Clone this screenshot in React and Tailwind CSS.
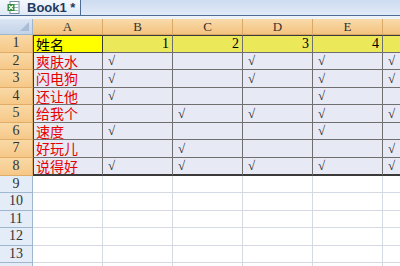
import React from 'react';

const names = ['爽肤水', '闪电狗', '还让他', '给我个', '速度', '好玩儿', '说得好'];

// B..F per row
const marks = [
  [1, 0, 1, 1, 1],
  [1, 0, 1, 1, 1],
  [1, 0, 0, 1, 0],
  [0, 1, 1, 1, 1],
  [1, 0, 0, 1, 0],
  [0, 1, 0, 0, 1],
  [1, 1, 1, 1, 1],
];

// F sits past the right edge, so its letter and number are not in view
const cols = ['A', 'B', 'C', 'D', 'E', ''];

const serif = { fontFamily: '"Liberation Serif", "DejaVu Serif", serif' };
const cjk = { fontFamily: '"Noto Sans CJK SC", "Noto Sans", sans-serif' };

const ExcelIcon = () => (
  <svg width="13" height="13" viewBox="0 0 13 13">
    <rect x="3" y="0.5" width="9" height="12" fill="#fff" stroke="#7b8fa8" />
    <line x1="6" y1="3.5" x2="11" y2="3.5" stroke="#9bb" />
    <line x1="6" y1="6.5" x2="11" y2="6.5" stroke="#9bb" />
    <line x1="6" y1="9.5" x2="11" y2="9.5" stroke="#9bb" />
    <rect x="0.5" y="3" width="7" height="7" fill="#2e8b3a" />
    <path d="M2 4.5 L6 8.5 M6 4.5 L2 8.5" stroke="#fff" strokeWidth="1.3" />
  </svg>
);

const RowHead = ({ n, active }) => (
  <div
    className={`w-[33px] shrink-0 h-full flex items-center justify-center text-[14px] leading-none text-[#333] border-r border-b ${
      active
        ? 'bg-gradient-to-b from-[#f9d9a6] to-[#f6c888] border-[#e0ad68]'
        : 'bg-[#e4ecf7] border-[#9eb6ce]'
    }`}
    style={serif}
  >
    {n}
  </div>
);

const Check = () => (
  <span className="absolute left-[5px] bottom-[2px] text-[13px] leading-none text-[#222] italic" style={serif}>
    √
  </span>
);

export default function App() {
  return (
    <div className="w-[400px] h-[266px] overflow-hidden bg-white select-none">
      {/* tab strip */}
      <div className="h-[19px] flex flex-col bg-gradient-to-b from-[#cddcf0] to-[#e6eef9]">
        <div className="h-[16px] flex">
          <div className="w-[81px] h-full flex items-center gap-[7px] pl-[7px] bg-gradient-to-b from-[#f4f8fd] to-[#dfe9f6] border-r border-b border-[#4d6c96]">
            <ExcelIcon />
            <span className="text-[13px] font-bold text-[#1e3a5f] leading-none" style={{ fontFamily: '"Liberation Sans", Arial, sans-serif' }}>
              Book1 *
            </span>
          </div>
          <div className="flex-1 border-b border-[#4d6c96]" />
        </div>
        <div className="flex-1 bg-[#eef3fa]" />
      </div>

      {/* column headers */}
      <div className="h-[16px] flex overflow-hidden">
        <div className="w-[33px] shrink-0 h-full relative bg-gradient-to-b from-[#dbe5f3] to-[#c3d3e8] border-r border-b border-[#9eb6ce]">
          <div className="absolute right-[3px] bottom-[3px] w-0 h-0 border-l-[9px] border-l-transparent border-b-[9px] border-b-[#a9bdd6]" />
        </div>
        {cols.map((c, i) => (
          <div
            key={i}
            className="w-[70px] shrink-0 h-full flex items-center justify-center text-[13px] leading-none text-[#333] bg-gradient-to-b from-[#f9dbab] to-[#f4c27e] border-r border-b border-[#d9a865]"
            style={serif}
          >
            {c}
          </div>
        ))}
      </div>

      {/* row 1 */}
      <div className="h-[17.5px] flex overflow-hidden">
        <RowHead n={1} active />
        <div className="w-[70px] shrink-0 h-full bg-[#ffff00] border-t border-l border-r border-b border-[#3a3a3a] flex items-center pl-[2px] text-[14px] leading-none text-black" style={cjk}>
          姓名
        </div>
        {[1, 2, 3, 4, null].map((n, i) => (
          <div
            key={i}
            className="w-[70px] shrink-0 h-full bg-[#ebe85a] border-t border-t-[#3a3a3a] border-r border-b border-[#6f6f6f] flex items-center justify-end pr-[3px] text-[14px] leading-none text-black"
            style={serif}
          >
            {n}
          </div>
        ))}
      </div>

      {/* rows 2-8 */}
      {names.map((name, r) => {
        const last = r === names.length - 1;
        return (
          <div key={name} className={`${last ? 'h-[18px]' : 'h-[17.5px]'} flex overflow-hidden`}>
            <RowHead n={r + 2} active />
            <div
              className={`w-[70px] shrink-0 h-full bg-[#e7eaf4] border-l border-l-[#3a3a3a] border-r border-[#6f6f6f] flex items-center pl-[2px] text-[14px] leading-none text-[#e60000] ${
                last ? 'border-b-2 border-b-[#3a3a3a]' : 'border-b'
              }`}
              style={cjk}
            >
              {name}
            </div>
            {marks[r].map((m, i) => (
              <div
                key={i}
                className={`w-[70px] shrink-0 h-full relative bg-[#e7eaf4] border-r border-[#6f6f6f] ${
                  last ? 'border-b-2 border-b-[#3a3a3a]' : 'border-b'
                }`}
              >
                {m ? <Check /> : null}
              </div>
            ))}
          </div>
        );
      })}

      {/* empty rows */}
      {[9, 10, 11, 12, 13, null].map((n, k) => (
        <div key={k} className="h-[17.5px] flex overflow-hidden">
          <RowHead n={n} />
          {cols.map((c, i) => (
            <div key={i} className="w-[70px] shrink-0 h-full border-r border-b border-[#d4d9e3]" />
          ))}
        </div>
      ))}
    </div>
  );
}
